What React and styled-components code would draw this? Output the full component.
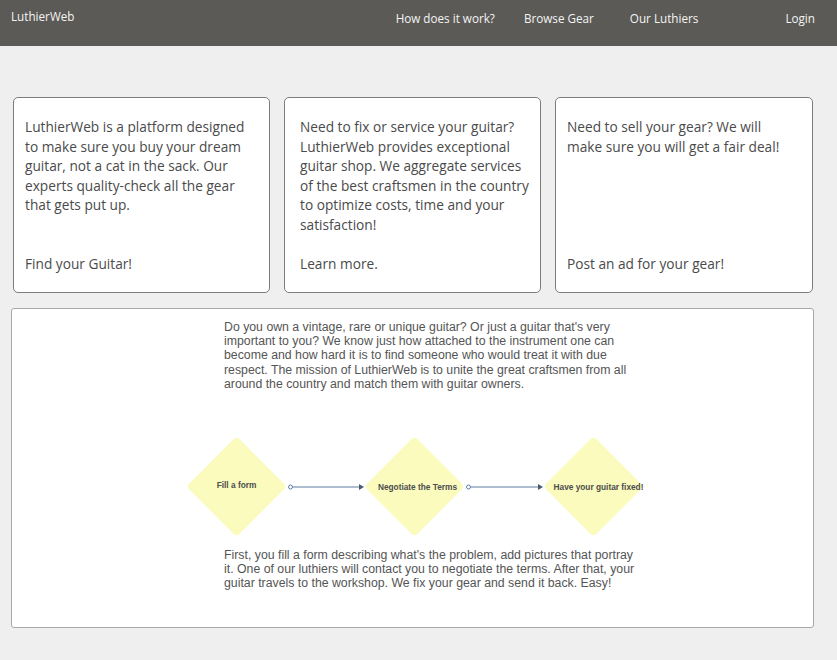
import styled, { createGlobalStyle } from 'styled-components';

const GlobalStyle = createGlobalStyle`
  html, body {
    margin: 0;
    padding: 0;
    background: #efefef;
  }
  body {
    font-family: "Open Sans", "Noto Sans", sans-serif;
  }
`;

const Header = styled.header`
  display: flex;
  align-items: flex-start;
  height: 46px;
  background: #5b5a56;
  color: #f4f4f4;
  font-size: 11.7px;
  box-sizing: border-box;
  padding: 8px 22px 0 11px;
`;

const Brand = styled.div`
  flex: 1;
`;

const Nav = styled.nav`
  display: flex;
  align-items: center;
  padding-top: 2px;
`;

const NavLink = styled.a`
  color: #f4f4f4;
  text-decoration: none;
  margin-left: ${({ $gap }) => $gap}px;
`;

const Main = styled.main`
  display: flex;
  flex-direction: column;
  gap: 15px;
  padding: 51px 23px 0 11px;
`;

const CardRow = styled.div`
  display: grid;
  grid-template-columns: 257px 257px 258px;
  gap: 14px;
  padding-left: 2px;
`;

const Card = styled.div`
  display: flex;
  flex-direction: column;
  justify-content: space-between;
  height: 196px;
  box-sizing: border-box;
  padding: 19px ${({ $right }) => $right}px 19px ${({ $inset }) => $inset}px;
  background: #fff;
  border: 1px solid #7d7d7d;
  border-radius: 5px;
  color: #4a4a4a;
  font-size: 13.7px;
  line-height: 19.5px;
`;

const CardText = styled.p`
  margin: 0;
`;

const CardLink = styled.a`
  color: #4a4a4a;
  text-decoration: none;
`;

const InfoBox = styled.section`
  display: flex;
  flex-direction: column;
  align-items: flex-start;
  height: 320px;
  box-sizing: border-box;
  padding: 11px 0 0;
  background: #fff;
  border: 1px solid #a9a9a9;
  border-radius: 3px;
`;

const Paragraph = styled.p`
  margin: 0 0 0 212px;
  width: 412px;
  font-family: "Liberation Sans", Arial, sans-serif;
  font-size: 12.3px;
  line-height: 14.2px;
  color: #555;
`;

const Flow = styled.div`
  display: flex;
  align-items: center;
  margin: 45px 0 11px 174px;
`;

const Step = styled.div`
  position: relative;
  display: flex;
  align-items: center;
  justify-content: center;
  width: 101px;
  height: 101px;
`;

const Diamond = styled.div`
  position: absolute;
  top: 15px;
  left: 15px;
  width: 71px;
  height: 71px;
  background: #fafbbd;
  border-radius: 4px;
  transform: rotate(45deg);
`;

const StepLabel = styled.span`
  position: relative;
  font-family: "Liberation Sans", Arial, sans-serif;
  font-weight: bold;
  font-size: 8.3px;
  color: #4d4d4d;
  white-space: nowrap;
  margin-top: ${({ $dy }) => $dy || 0}px;
  margin-left: ${({ $dx }) => $dx || 0}px;
`;

const Connector = styled.svg`
  display: block;
  width: ${({ width }) => width}px;
  height: 10px;
`;

const Arrow = ({ width }) => (
  <Connector width={width} viewBox={`0 0 ${width} 10`}>
    <circle cx="3.5" cy="5" r="2" fill="#fff" stroke="#5d7fa3" strokeWidth="1" />
    <line x1="5.5" y1="5" x2={width - 4} y2="5" stroke="#5d7fa3" strokeWidth="1.2" />
    <polygon points={`${width - 5},2 ${width},5 ${width - 5},8`} fill="#4e5d6e" />
  </Connector>
);

const cards = [
  {
    inset: 11,
    right: 20,
    text: 'LuthierWeb is a platform designed to make sure you buy your dream guitar, not a cat in the sack. Our experts quality-check all the gear that gets put up.',
    link: 'Find your Guitar!',
  },
  {
    inset: 15,
    right: 4,
    text: 'Need to fix or service your guitar? LuthierWeb provides exceptional guitar shop. We aggregate services of the best craftsmen in the country to optimize costs, time and your satisfaction!',
    link: 'Learn more.',
  },
  {
    inset: 11,
    right: 20,
    text: 'Need to sell your gear? We will make sure you will get a fair deal!',
    link: 'Post an ad for your gear!',
  },
];

export default function App() {
  return (
    <>
      <GlobalStyle />
      <Header>
        <Brand>LuthierWeb</Brand>
        <Nav>
          <NavLink href="#" $gap={0}>How does it work?</NavLink>
          <NavLink href="#" $gap={29}>Browse Gear</NavLink>
          <NavLink href="#" $gap={36}>Our Luthiers</NavLink>
          <NavLink href="#" $gap={87}>Login</NavLink>
        </Nav>
      </Header>
      <Main>
        <CardRow>
          {cards.map((c) => (
            <Card key={c.link} $inset={c.inset} $right={c.right}>
              <CardText>{c.text}</CardText>
              <CardLink href="#">{c.link}</CardLink>
            </Card>
          ))}
        </CardRow>
        <InfoBox>
          <Paragraph>
            Do you own a vintage, rare or unique guitar? Or just a guitar that's very
            important to you? We know just how attached to the instrument one can
            become and how hard it is to find someone who would treat it with due
            respect. The mission of LuthierWeb is to unite the great craftsmen from all
            around the country and match them with guitar owners.
          </Paragraph>
          <Flow>
            <Step>
              <Diamond />
              <StepLabel $dy={-4}>Fill a form</StepLabel>
            </Step>
            <Arrow width={77} />
            <Step>
              <Diamond />
              <StepLabel $dx={6}>Negotiate the Terms</StepLabel>
            </Step>
            <Arrow width={78} />
            <Step>
              <Diamond />
              <StepLabel $dx={10}>Have your guitar fixed!</StepLabel>
            </Step>
          </Flow>
          <Paragraph>
            First, you fill a form describing what's the problem, add pictures that portray
            it. One of our luthiers will contact you to negotiate the terms. After that, your
            guitar travels to the workshop. We fix your gear and send it back. Easy!
          </Paragraph>
        </InfoBox>
      </Main>
    </>
  );
}
